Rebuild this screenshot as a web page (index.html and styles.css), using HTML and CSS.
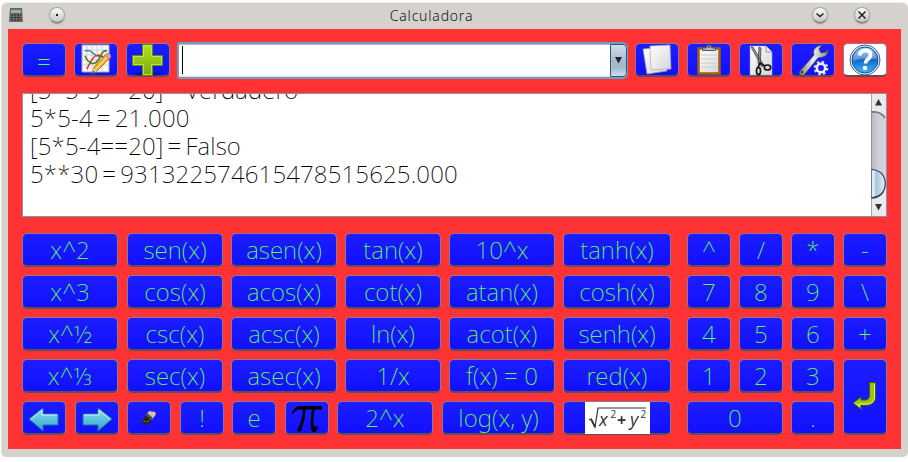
FILE: index.html
```html
<!DOCTYPE html>
<html lang="es">
<head>
<meta charset="utf-8">
<title>Calculadora</title>
<link rel="stylesheet" href="styles.css">
</head>
<body>
<svg width="0" height="0" class="defs">
  <defs>
    <linearGradient id="paper" x2="1" y2="1"><stop stop-color="#fff"/><stop offset="1" stop-color="#d5d5d5"/></linearGradient>
    <linearGradient id="green" x2="0" y2="1"><stop stop-color="#b4e31d"/><stop offset="1" stop-color="#79a90c"/></linearGradient>
    <linearGradient id="cyan" x2="0" y2="1"><stop stop-color="#8ce0ee"/><stop offset="1" stop-color="#2fa4cf"/></linearGradient>
    <linearGradient id="steel" x2="1" y2="0"><stop stop-color="#777"/><stop offset=".5" stop-color="#eee"/><stop offset="1" stop-color="#888"/></linearGradient>
    <linearGradient id="help" x2="0" y2="1"><stop stop-color="#8fc0ec"/><stop offset=".5" stop-color="#1768c8"/><stop offset="1" stop-color="#32baff"/></linearGradient>
  </defs>
</svg>
<div class="window">
  <header class="titlebar">
    <svg class="app" width="14" height="14" viewBox="0 0 14 14"><path d="M1 0h12l1 14H0z" fill="#626b67"/><path d="M2 2h10v3H2z" fill="#9fb09f"/><path d="M2 7h10M2 9.500h10M2 12h10" stroke="#252a29" stroke-dasharray="2 1"/><path d="M10 10h2v2h-2z" fill="#d22"/></svg>
    <span class="round menu"><i></i></span>
    <h1>Calculadora</h1>
    <span class="round min"><svg width="16" height="16" viewBox="0 0 16 16"><path d="M4.500 6.500 8 9.500l3.500-3"/></svg></span>
    <span class="round close"><svg width="16" height="16" viewBox="0 0 16 16"><path d="m4.500 4.500 7 7m0-7-7 7"/></svg></span>
  </header>
  <main>
    <div class="toolbar">
      <button class="eq">=</button>
      <button><svg width="32" height="32" viewBox="0 0 32 32"><path d="M2 1h27v27H2z" fill="#f7f7f7" stroke="#aaa"/><path d="M7 2v25M12 2v25M17 2v25M22 2v25M3 6h25M3 11h25M3 16h25M3 21h25" stroke="#d2d2d2"/><g fill="none" stroke-width="1.600"><path d="M5 7c7-3 8 5 13 5 4 0 6 2 8 3" stroke="#2683bc"/><path d="M7 25c3-7 7-14 11-14 3 0 4 2 7 3" stroke="#d33"/><path d="M5 12c5 10 10 9 14 3 3-6 4-9 8-8" stroke="#38831e"/></g><path d="m12 30 2-7L26 10l4 4-13 13z" fill="#f9a528" stroke="#96611c" stroke-width=".7"/><path d="m16 25 12-13" stroke="#ffdd75" stroke-width="1.500"/><path d="m12 30 2-6 3 3z" fill="#efd4a4"/><path d="m12 30 1-3 2 1z" fill="#333"/><path d="m25 11 2-2q4 0 4 4l-2 2z" fill="#df93b0" stroke="#888" stroke-width=".6"/></svg></button>
      <button class="left"><svg width="32" height="32" viewBox="0 0 32 32"><ellipse cx="17" cy="30" rx="14" ry="2" fill="#002" opacity=".3"/><path d="M11.500.5h10v11h10v10h-10v10h-10v-10h-10v-10h10z" fill="url(#green)" stroke="#638c0b"/><path d="M12.500 1.500h8v11h10v8h-10v10h-8v-10h-10v-8h10z" fill="none" stroke="#c7ed4b" opacity=".8"/></svg></button>
      <div class="combo"><div class="entry"><i></i></div><div class="drop"><svg width="7" height="7" viewBox="0 0 7 7"><path d="M0 0h7L3.500 6.500z" fill="#202427"/></svg></div></div>
      <button><svg width="32" height="32" viewBox="0 0 32 32"><path d="m2 5 20-2 4 24-20 3z" fill="url(#paper)" stroke="#999" stroke-width=".7"/><path d="m9 2 20-1 1 24-20 1z" fill="url(#paper)" stroke="#aaa" stroke-width=".7"/></svg></button>
      <button><svg width="32" height="32" viewBox="0 0 32 32"><path d="M5.500 4.500h21v25h-21z" fill="url(#paper)" stroke="#a45d0b" stroke-width="2.500"/><path d="M8 11h16M8 15h16M8 19h16M8 23h16" stroke="#ccc"/><path d="M9.500 6.500V4h4q0-3 2.500-3t2.500 3h4v2.500z" fill="#bbb" stroke="#555"/><circle cx="16" cy="3" r="1" fill="#444"/></svg></button>
      <button><svg width="32" height="32" viewBox="0 0 32 32"><path d="M5 2h16l6 6v23H5z" fill="url(#paper)" stroke="#aaa" stroke-width=".5"/><path d="M21 2v6h6" fill="#eee" stroke="#999"/><path d="m6 3 2 0 10 17-1 3zM14 3l2 1-1 18-2-3z" fill="#999" stroke="#333" stroke-width=".7"/><path d="m15 19-2 4m2-4 5 3" stroke="#111" stroke-width="1.600"/><g fill="none" stroke="#161616" stroke-width="1.700"><ellipse cx="13.500" cy="27" rx="2" ry="3.700"/><ellipse cx="22.500" cy="23.500" rx="3.200" ry="2.500"/></g></svg></button>
      <button><svg width="32" height="32" viewBox="0 0 32 32"><path d="m2 28 15-17q-2-6 4-9l4-1-3 4 2 4 5-1 2-3q0 7-5 8l-5 1L7 31q-4 2-5-3z" fill="url(#steel)" stroke="#444" stroke-width=".8"/><circle cx="5" cy="28" r="1.200" fill="#333"/><circle cx="24" cy="24" r="5.800" fill="none" stroke="#ddd" stroke-width="3" stroke-dasharray="2.300 2.250"/><circle cx="24" cy="24" r="4.200" fill="#1717ff" stroke="#eee" stroke-width="2.600"/></svg></button>
      <button class="white"><svg width="32" height="32" viewBox="0 0 32 32"><circle cx="16" cy="16" r="15" fill="#eaf3fc" stroke="#4d5c75"/><circle cx="16" cy="16" r="13" fill="url(#help)" stroke="#0756ad"/><path d="M4 17a12 12 0 0 1 24-2Q16 12 4 17" fill="#fff" opacity=".27"/><path d="M10.500 11.500q1-5 6-5 5 0 5 4 0 3-3 5-2 1.500-2 4" fill="none" stroke="#fff" stroke-width="3.800"/><circle cx="16" cy="24" r="2.300" fill="#fff"/></svg></button>
    </div>
    <section class="output">
      <div class="lines"><p>[5*5-5==20] = Verdadero</p><p>5*5-4 = 21.000</p><p>[5*5-4==20] = Falso</p><p>5**30 = 931322574615478515625.000</p></div>
      <div class="scroll"><svg width="15" height="122" viewBox="0 0 15 122">
        <defs><linearGradient id="trk"><stop stop-color="#b5b6be"/><stop offset=".5" stop-color="#cfd0d8"/><stop offset="1" stop-color="#d3d4dd"/></linearGradient><linearGradient id="thumb"><stop stop-color="#a2bdd2"/><stop offset=".15" stop-color="#eef6fb"/><stop offset=".35" stop-color="#aac4d8"/><stop offset="1" stop-color="#e0f2ff"/></linearGradient></defs>
        <path d="M0 0h15v122H0z" fill="#e9eaee"/><path d="M0 17q11-1 15 8v67q-2 12-15 12z" fill="url(#trk)"/><path d="M0 18q10-1 14 6" fill="none" stroke="#55565c" stroke-width="1.800" opacity=".7"/><path d="M0 104q8 0 12-6" fill="none" stroke="#444" stroke-width="1.500"/><path d="M0 75.500c8 0 14.300 5 14.300 14s-6.300 14-14.300 14z" fill="url(#thumb)" stroke="#253f55" stroke-width="1.200"/><path d="M4 11.500h7L7.500 5zM4 110h7l-3.500 6.500z" fill="#333"/><path d="M.5 0v122" stroke="#777b82" opacity=".6"/></svg></div>
    </section>
    <div class="keys">
      <div class="functions">
        <div class="row six"><button>x^2</button><button>sen(x)</button><button>asen(x)</button><button>tan(x)</button><button>10^x</button><button>tanh(x)</button></div>
        <div class="row six"><button>x^3</button><button>cos(x)</button><button>acos(x)</button><button>cot(x)</button><button>atan(x)</button><button>cosh(x)</button></div>
        <div class="row six"><button>x^½</button><button>csc(x)</button><button>acsc(x)</button><button>ln(x)</button><button>acot(x)</button><button>senh(x)</button></div>
        <div class="row six"><button>x^⅓</button><button>sec(x)</button><button>asec(x)</button><button>1/x</button><button>f(x) = 0</button><button>red(x)</button></div>
        <div class="row nine">
          <button><svg width="32" height="32" viewBox="0 0 32 32"><path d="M1 17 15 6v6h15v11H15v6z" fill="url(#cyan)" stroke="#1f7295"/><path d="M3 17 14 8v5h15" fill="none" stroke="#c6f5fa"/></svg></button>
          <button><svg width="32" height="32" viewBox="0 0 32 32"><path d="M31 17 17 6v6H2v11h15v6z" fill="url(#cyan)" stroke="#1f7295"/><path d="M29 17 18 8v5H3" fill="none" stroke="#c6f5fa"/></svg></button>
          <button><svg width="16" height="16" viewBox="0 0 16 16"><path d="m1 11 4-6 6 5-4 5-5-1z" fill="#24231f"/><path d="m5 5 3-4 6 1 1 2-4 6z" fill="#d8c1a0"/><path d="m5 5 1-2 6 5-1 2z" fill="#4b4740"/><path d="m2 11 5 1 3-4" fill="none" stroke="#66635b"/></svg></button>
          <button>!</button><button>e</button>
          <button><svg width="32" height="32" viewBox="0 0 32 32"><path d="M1 12Q3 5 8 4h23v3.500H8Q4 8 2 12z"/><path d="M12 6h2.500c0 10-2 15-4 22q-2 3-4.500.5c2-5 6-10 6-22.500zM21 6h3c-2 9-2 19 0 19q1 1 2-1h1q-1 6-4 6c-5 0-3-14-2-24z"/></svg></button>
          <button>2^x</button><button>log(x, y)</button>
          <button><span class="root"><svg width="65" height="32" viewBox="0 0 65 32"><path d="M4 18l2-1 4 8 3-19h48" fill="none" stroke="#333" stroke-width="1.200"/><path d="m6 17 4 8" stroke="#333" stroke-width="1.800"/><g fill="#333"><text x="14" y="24" class="v">x</text><text x="25.500" y="16" class="s">2</text><text x="32" y="24" class="plus">+</text><text x="45" y="24" class="v">y</text><text x="55.500" y="16" class="s">2</text></g></svg></span></button>
        </div>
      </div>
      <div class="numpad">
        <button>^</button><button>/</button><button>*</button><button>-</button>
        <button>7</button><button>8</button><button>9</button><button>\</button>
        <button>4</button><button>5</button><button>6</button><button>+</button>
        <button>1</button><button>2</button><button>3</button>
        <button class="enter"><svg width="26" height="30" viewBox="0 0 26 30"><path d="M18.500 1.500h6v14q0 9-10 9h-5l1 4L2 22l8-6v3h4q4.500 0 4.500-5z" fill="#9bc40b" stroke="#405d0a"/><path d="M23.500 3v13q0 7-9 7H8l1 3-5-4" fill="none" stroke="#e2f291"/></svg></button>
        <button class="zero">0</button><button>.</button>
      </div>
    </div>
  </main>
</div>
</body>
</html>
```
FILE: styles.css
```css
* { box-sizing: border-box; }
body { margin: 0; background: #fff; font-family: "Noto Sans", "Open Sans", sans-serif; overflow: hidden; }
.defs { position: absolute; }
.window { width: 907px; height: 455px; margin: 2px 0 0 1px; background: #d5d1cd; border-radius: 6px 6px 5px 5px; border-top: 1px solid #eee; border-left: 1px solid #e5e3e0; padding: 0 6px; }
.titlebar { height: 26px; display: flex; align-items: center; padding: 0 32px 3px 1px; }
.round { width: 16px; height: 16px; border-radius: 50%; background: linear-gradient(#fafafa, #c8c6c4); border: 1px solid #aaa6a3; border-bottom-color: #777; box-shadow: 0 1px 1px #999; display: flex; align-items: center; justify-content: center; }
.round svg { flex: none; fill: none; stroke: #222; stroke-width: 1.5; }
.menu { margin-left: 26px; }
.menu i { width: 2px; height: 2px; background: #222; }
.titlebar h1 { flex: 1; margin: 0; font-size: 14px; line-height: 24px; font-weight: 350; letter-spacing: .8px; color: #111; text-align: center; padding-right: 14px; padding-top: 2px; }
.min { margin-right: 26px; }
main { width: 893px; height: 420px; background: #ff3333; padding: 13px 14px; }
.toolbar { display: flex; gap: 8px; height: 37px; align-items: flex-start; }
button { display: flex; align-items: center; justify-content: center; flex: none; width: 44px; height: 34px; margin: 1px 0 0; padding: 0; border: 1px solid #8b7a92; border-bottom: 2px solid #5b5058; border-radius: 5px; background: linear-gradient(#1d1dff, #1010ff); color: #64ff40; font: 200 24px "Noto Sans", "Open Sans", sans-serif; line-height: 30px; letter-spacing: .1px; white-space: pre; }
button svg { flex: none; }
.eq { padding-top: 4px; }
.left { padding-right: 2px; }
.white { background: #fff; }
.combo { width: 451px; height: 37px; margin: 0 -1px; display: flex; border: 2px solid #6b9fc8; border-right-width: 1px; border-radius: 3px 6px 6px 3px; background: #fff; }
.entry { flex: 1; border-top: 1px solid #bbb; border-bottom: 1px solid #ddd; padding: 1px 0 0 3px; }
.entry i { display: block; width: 1px; height: 28px; background: #000; }
.drop { width: 17px; border: 1px solid #315777; border-radius: 0 4px 4px 0; display: flex; align-items: center; justify-content: center; background: linear-gradient(#d2deea, #a2b8cd 55%, #a5bdd1 75%, #c7dfef); }
.output { height: 124px; margin-top: 14px; border: 1px solid #8c94a0; background: #fff; overflow: hidden; display: flex; justify-content: space-between; }
.lines { margin-top: -18px; padding-left: 7px; font-size: 24px; font-weight: 250; line-height: 28px; letter-spacing: .15px; word-spacing: -2.3px; color: #000; }
.lines p { margin: 0; height: 28px; white-space: nowrap; }
.scroll, .scroll svg { width: 15px; display: block; }
.keys { display: flex; justify-content: space-between; margin-top: 16px; }
.functions { width: 649px; display: grid; gap: 8px; }
.functions button, .numpad button { width: auto; height: 34px; margin: 0; }
.row { display: grid; column-gap: 8px; }
.six { grid-template-columns: 97px 96px 106px 96px 106px 108px; }
.nine { grid-template-columns: 45px 44px 45px 44px 45px 44px 97px 113px 108px; }
.six button:first-child, .nine button:nth-child(odd):not(:last-child) { margin-right: 1px; }
.numpad { display: grid; grid-template: repeat(5, 34px) / repeat(4, 44px); gap: 8px; }
.numpad .enter { grid-column: 4; grid-row: 4 / 6; height: 76px; padding: 0 2px 2px 0; }
.numpad .zero { grid-column: 1 / 3; }
.root { width: 65px; height: 32px; background: #fff; }
.root svg { display: block; }
.v { font: italic 18px "Open Sans", sans-serif; }
.s { font: 10px "Open Sans", sans-serif; }
.plus { font: bold 16px "Open Sans", sans-serif; }
```
